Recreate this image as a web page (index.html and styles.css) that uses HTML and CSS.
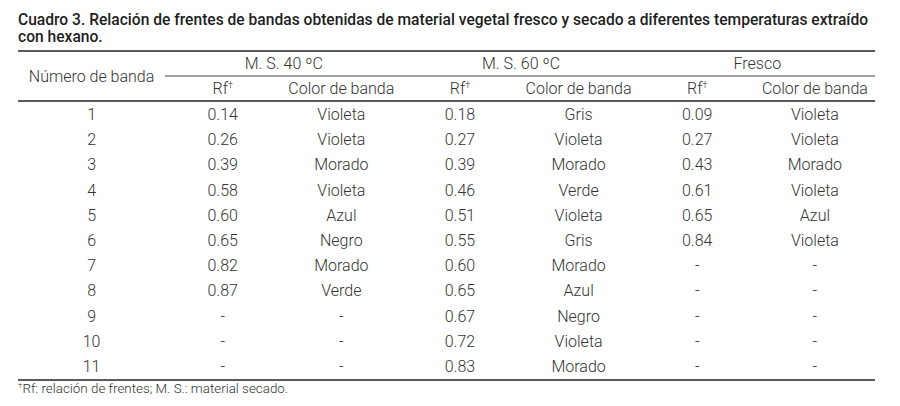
FILE: index.html
```html
<!DOCTYPE html>
<html lang="es">
<head>
<meta charset="utf-8">
<title>Cuadro 3</title>
<link rel="stylesheet" href="styles.css">
</head>
<body>
<div class="page">
  <p class="caption">Cuadro 3. Relación de frentes de bandas obtenidas de material vegetal fresco y secado a diferentes temperaturas extraído con hexano.</p>
  <table class="data">
    <colgroup>
      <col class="c-num">
      <col class="c-rf">
      <col class="c-col">
      <col class="c-rf">
      <col class="c-col">
      <col class="c-rf">
      <col class="c-col2">
    </colgroup>
    <thead>
      <tr class="h1">
        <th rowspan="2" class="num-h">Número de banda</th>
        <th colspan="2">M. S. 40 ºC</th>
        <th colspan="2">M. S. 60 ºC</th>
        <th colspan="2">Fresco</th>
      </tr>
      <tr class="h2">
        <th>Rf<sup>†</sup></th>
        <th>Color de banda</th>
        <th>Rf<sup>†</sup></th>
        <th>Color de banda</th>
        <th>Rf<sup>†</sup></th>
        <th>Color de banda</th>
      </tr>
    </thead>
    <tbody>
      <tr><td>1</td><td>0.14</td><td>Violeta</td><td>0.18</td><td>Gris</td><td>0.09</td><td>Violeta</td></tr>
      <tr><td>2</td><td>0.26</td><td>Violeta</td><td>0.27</td><td>Violeta</td><td>0.27</td><td>Violeta</td></tr>
      <tr><td>3</td><td>0.39</td><td>Morado</td><td>0.39</td><td>Morado</td><td>0.43</td><td>Morado</td></tr>
      <tr><td>4</td><td>0.58</td><td>Violeta</td><td>0.46</td><td>Verde</td><td>0.61</td><td>Violeta</td></tr>
      <tr><td>5</td><td>0.60</td><td>Azul</td><td>0.51</td><td>Violeta</td><td>0.65</td><td>Azul</td></tr>
      <tr><td>6</td><td>0.65</td><td>Negro</td><td>0.55</td><td>Gris</td><td>0.84</td><td>Violeta</td></tr>
      <tr><td>7</td><td>0.82</td><td>Morado</td><td>0.60</td><td>Morado</td><td>-</td><td>-</td></tr>
      <tr><td>8</td><td>0.87</td><td>Verde</td><td>0.65</td><td>Azul</td><td>-</td><td>-</td></tr>
      <tr><td>9</td><td>-</td><td>-</td><td>0.67</td><td>Negro</td><td>-</td><td>-</td></tr>
      <tr><td>10</td><td>-</td><td>-</td><td>0.72</td><td>Violeta</td><td>-</td><td>-</td></tr>
      <tr><td>11</td><td>-</td><td>-</td><td>0.83</td><td>Morado</td><td>-</td><td>-</td></tr>
    </tbody>
  </table>
  <p class="note"><sup>†</sup>Rf: relación de frentes; M. S.: material secado.</p>
</div>
</body>
</html>
```

FILE: styles.css
```css
html, body {
  margin: 0;
  padding: 0;
  background: #ffffff;
}

body {
  font-family: Roboto, "Liberation Sans", sans-serif;
  color: #333333;
}

.page {
  width: 857px;
  padding: 12px 0 0 18px;
}

.caption {
  width: 864px;
  margin: 0 0 4px 0;
  font-size: 15.6px;
  line-height: 17px;
  font-weight: 500;
  color: #1e1e1e;
}

.data {
  width: 857px;
  border-collapse: collapse;
  table-layout: fixed;
  font-size: 16px;
  font-weight: 300;
  color: #333333;
  border-top: 2px solid #5a5a5a;
  border-bottom: 2px solid #5a5a5a;
}

.c-num { width: 147px; }
.c-rf { width: 115px; }
.c-col { width: 122px; }
.c-col2 { width: 120px; }

.data th,
.data td {
  padding: 0;
  text-align: center;
  font-weight: 300;
  white-space: nowrap;
}

.h1 th {
  height: 23px;
  border-bottom: 2px solid #a2a2a2;
}

.h1 th.num-h {
  border-bottom: none;
  vertical-align: middle;
}

.h2 th {
  height: 23px;
}

thead {
  border-bottom: 2px solid #5a5a5a;
}

.data tbody td {
  height: 25.2px;
  line-height: 19px;
}

.data sup {
  font-size: 9px;
  vertical-align: 6px;
  line-height: 0;
}

.note {
  margin: 0;
  font-size: 13.4px;
  line-height: 15px;
  font-weight: 300;
  color: #333333;
}

.note sup {
  font-size: 8px;
  vertical-align: 5px;
  line-height: 0;
}
```
